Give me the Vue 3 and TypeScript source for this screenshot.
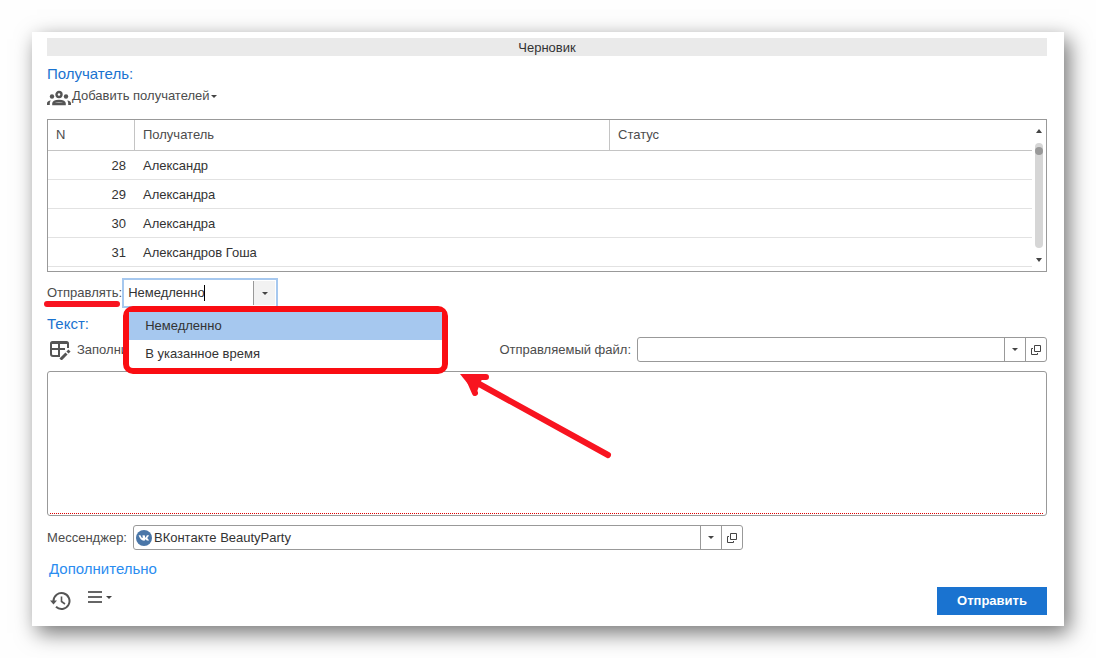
<script setup lang="ts">
import { ref } from 'vue'

interface Recipient {
  n: number
  name: string
  status: string
}

const recipients: Recipient[] = [
  { n: 28, name: 'Александр', status: '' },
  { n: 29, name: 'Александра', status: '' },
  { n: 30, name: 'Александра', status: '' },
  { n: 31, name: 'Александров Гоша', status: '' },
]

const sendOptions = ['Немедленно', 'В указанное время']
const sendMode = ref('Немедленно')
const file = ref('')
const message = ref('')
const messenger = ref('ВКонтакте BeautyParty')
</script>

<template>
  <main class="card">
    <header class="status-bar">Черновик</header>

    <h2 class="section">Получатель:</h2>
    <button type="button" class="tool add">
      <svg class="people" width="24" height="16" viewBox="0 0 24 16" fill="none" stroke="#555" stroke-width="2.400">
        <circle cx="12" cy="4.500" r="2.500" />
        <circle cx="5" cy="6.500" r="2.200" fill="#555" stroke="none" />
        <circle cx="19" cy="6.500" r="2.200" fill="#555" stroke="none" />
        <path d="M6.400 14v-.4c0-1.700 2.400-2.600 5.600-2.600s5.600.9 5.600 2.600v.4z" />
        <path d="M0 15v-1.400c0-1.700 1.300-2.800 3.800-3-.8.900-1 1.800-1 3V15zM24 15v-1.400c0-1.700-1.300-2.800-3.800-3 .8.900 1 1.800 1 3V15z" fill="#555" stroke="none" />
      </svg>
      <span>Добавить получателей</span>
      <i class="caret"></i>
    </button>

    <section class="grid-box">
      <table>
        <colgroup><col class="c-num" /><col class="c-name" /><col /></colgroup>
        <thead>
          <tr><th>N</th><th>Получатель</th><th>Статус</th></tr>
        </thead>
        <tbody>
          <tr v-for="r in recipients" :key="r.n">
            <td class="num">{{ r.n }}</td><td>{{ r.name }}</td><td>{{ r.status }}</td>
          </tr>
        </tbody>
      </table>
      <div class="scroll">
        <i class="arrow up"></i>
        <div class="track"><i class="thumb"></i></div>
        <i class="arrow down"></i>
      </div>
    </section>

    <div class="row send-row">
      <label for="send" class="marked">Отправлять:</label>
      <div class="combo">
        <input id="send" v-model="sendMode" type="text" role="combobox" aria-expanded="true" aria-controls="send-list" />
        <i class="cursor"></i>
        <button type="button" aria-label="Открыть список"><i class="caret"></i></button>
        <ul id="send-list" class="menu" role="listbox">
          <li v-for="o in sendOptions" :key="o" role="option" :aria-selected="o === sendMode" :class="{ active: o === sendMode }" @click="sendMode = o">{{ o }}</li>
        </ul>
        <svg class="pointer" width="156" height="92" viewBox="0 0 156 92" fill="none" stroke="#f81420" stroke-width="6" stroke-linecap="round">
          <path d="M148 83 12 8" />
          <path d="M26 5H8L15 21" />
          <path d="M0 2h24L16 22z" fill="#f81420" stroke="none" />
        </svg>
      </div>
    </div>

    <h2 class="section text-title">Текст:</h2>
    <div class="row file-row">
      <button type="button" class="tool fill">
        <svg width="21" height="20" viewBox="0 0 21 20" fill="none" stroke="#555" stroke-width="2">
          <path d="M10 16H3Q1 16 1 14V3.500Q1 2 2.500 2H16.500Q18 2 18 3.500V8M1 9H15M9 3V16" />
          <path d="M1 3H18" />
          <path d="M10.500 19.500 16.500 13.500" stroke-width="3" />
          <path d="M17.500 12.500 19.500 10.500" stroke-width="3" />
        </svg>
        <span>Заполнить</span>
      </button>
      <label for="file">Отправляемый файл:</label>
      <div class="field file-field">
        <input id="file" v-model="file" type="text" />
        <button type="button" aria-label="Выбрать файл"><i class="caret"></i></button>
        <button type="button" aria-label="Открыть файл">
          <svg width="10" height="10" viewBox="0 0 10 10" fill="none" stroke="#444"><path d="M3.500.5h6v6h-6zM2 3.500H.5v6h6V8" /></svg>
        </button>
      </div>
    </div>

    <div class="editor">
      <textarea v-model="message" aria-label="Текст"></textarea>
    </div>

    <div class="row messenger-row">
      <label for="messenger">Мессенджер:</label>
      <div class="field messenger-field">
        <svg class="vk" width="16" height="16" viewBox="0 0 16 16">
          <circle cx="8" cy="8" r="8" fill="#4a76a8" />
          <path d="M2.600 5.200h1.900c.5 1.500 1.100 2.500 1.800 2.900.4 0 .4-.5.4-1.200 0-.8-.2-1.100-.7-1.200.6-.7 2.900-.7 3 .1v1.800c.5.300 1.300-1 1.900-2.400h2c.2.600-1 2-1.700 2.800.2.500 1.900 1.700 1.900 2.600h-2.100c-.6-.5-1.300-1.500-1.800-1.400-.2.200-.1 1.200-.5 1.400-3.200.3-4.700-1.700-6.100-5.400z" fill="#fff" />
        </svg>
        <input id="messenger" v-model="messenger" type="text" />
        <button type="button" aria-label="Выбрать мессенджер"><i class="caret"></i></button>
        <button type="button" aria-label="Открыть мессенджер">
          <svg width="10" height="10" viewBox="0 0 10 10" fill="none" stroke="#444"><path d="M3.500.5h6v6h-6zM2 3.500H.5v6h6V8" /></svg>
        </button>
      </div>
    </div>

    <a href="#" class="more">Дополнительно</a>

    <footer class="row footer">
      <button type="button" class="tool" aria-label="История">
        <svg width="21" height="20" viewBox="0 0 21 20" fill="none" stroke="#555" stroke-width="2">
          <path d="M3.500 10A8 8 0 1 1 6 15.800" />
          <path d="M0 9.500H7L3.500 13.500z" fill="#555" stroke="none" />
          <path d="M11.500 5.500V10.500L15 13" stroke-width="1.600" />
        </svg>
      </button>
      <button type="button" class="tool list" aria-label="Меню">
        <svg width="14" height="12" viewBox="0 0 14 12" fill="#666"><path d="M0 0h14v2H0zM0 5h14v2H0zM0 10h14v2H0z" /></svg>
        <i class="caret"></i>
      </button>
      <button type="button" class="submit">Отправить</button>
    </footer>
  </main>
</template>

<style>
body {
  margin: 0;
  background: #fefefe;
}
</style>

<style scoped>
.card {
  margin: 32px;
  padding: 6px 17px 11px 15px;
  background: #fff;
  box-shadow: 5px 7px 20px rgba(0, 0, 0, 0.55);
  font: 13px/18px "Liberation Sans", Arial, sans-serif;
  color: #4c4c4c;
}
input, button, textarea {
  font: inherit;
  color: inherit;
  margin: 0;
  padding: 0;
  border: 0;
  background: none;
  outline: none;
  border-radius: 0;
}
input {
  flex: 1;
  min-width: 0;
  color: #333;
}
svg {
  display: block;
  flex: none;
}
.status-bar {
  height: 18px;
  line-height: 20px;
  background: #eaeaea;
  text-align: center;
  color: #333;
}
.section {
  margin: 8px 0 0;
  font-size: 15px;
  line-height: 20px;
  font-weight: normal;
  color: #1a73d0;
}
.tool {
  display: flex;
  align-items: center;
}
.add {
  height: 20px;
  margin-top: 2px;
  gap: 1px;
}
.people {
  align-self: flex-end;
}
.caret {
  width: 0;
  border: 3px solid transparent;
  border-top-color: #444;
  border-bottom: 0;
}
.grid-box {
  display: flex;
  margin-top: 13px;
  padding-bottom: 4px;
  border: 1px solid #999;
}
table {
  flex: 1;
  border-collapse: separate;
  border-spacing: 0;
  table-layout: fixed;
}
.c-num { width: 87px; }
.c-name { width: 475px; }
th {
  height: 30px;
  padding: 0 8px;
  text-align: left;
  font-weight: normal;
  border-bottom: 1px solid #c4c4c4;
  border-right: 1px solid #c4c4c4;
}
th:last-child { border-right: 0; }
td {
  height: 26px;
  padding: 2px 8px 0;
  border-bottom: 1px solid #e2e2e2;
  color: #333;
}
.num {
  padding-right: 9px;
  text-align: right;
}
.scroll {
  width: 14px;
  display: flex;
  flex-direction: column;
  align-items: center;
}
.arrow {
  border: 3px solid transparent;
}
.up {
  margin: 9px 0 10px;
  border-top: 0;
  border-bottom: 4px solid #444;
}
.down {
  margin: 10px 0 5px;
  border-bottom: 0;
  border-top: 4px solid #444;
}
.track {
  flex: 1;
  width: 8px;
  padding-top: 4px;
  border-radius: 4px;
  background: #d6d6d6;
}
.thumb {
  display: block;
  height: 8px;
  border-radius: 4px;
  background: #999;
}
.row {
  display: flex;
  align-items: center;
}
.send-row {
  margin-top: 6px;
}
.marked { position: relative; }
.marked::after {
  content: "";
  position: absolute;
  left: -3px;
  right: 2px;
  bottom: -5px;
  height: 6px;
  border-radius: 3px;
  background: #f81420;
}
.combo {
  position: relative;
  display: flex;
  width: 148px;
  height: 26px;
  padding-left: 4px;
  border: 2px solid #a6c8ef;
}
.combo button {
  width: 22px;
  margin: 1px;
  display: flex;
  align-items: center;
  justify-content: center;
  border-left: 1px solid #999;
  background: #f2f2f2;
}
.cursor {
  position: absolute;
  left: 80px;
  top: 5px;
  width: 1px;
  height: 16px;
  background: #000;
}
.menu {
  position: absolute;
  z-index: 1;
  left: -1px;
  top: 26px;
  width: 313px;
  margin: 0;
  padding: 0;
  list-style: none;
  border: 6px solid #fa0d12;
  border-radius: 10px;
  background: #fff;
  color: #333;
}
.menu li {
  padding: 0 16px;
  line-height: 28px;
}
.menu li.active {
  background: #a6c8ef;
}
.pointer {
  position: absolute;
  z-index: 1;
  left: 336px;
  top: 92px;
}
.text-title { margin-top: 6px; }
.file-row { margin-top: 3px; }
.fill {
  gap: 6px;
  margin: 0 auto 0 3px;
}
.field {
  box-sizing: border-box;
  display: flex;
  align-items: center;
  height: 25px;
  border: 1px solid #999;
  border-radius: 3px;
}
.field button {
  align-self: stretch;
  width: 21px;
  display: flex;
  align-items: center;
  justify-content: center;
  border-left: 1px solid #999;
}
.file-field {
  width: 41%;
  margin-left: 6px;
}
.editor {
  margin-top: 9px;
  padding: 2px 3px 1px 2px;
  border: 1px solid #999;
  border-radius: 3px;
}
textarea {
  display: block;
  box-sizing: border-box;
  width: 100%;
  height: 140px;
  resize: none;
  border-bottom: 1px dotted #d00;
}
.messenger-row { margin-top: 9px; }
.messenger-field {
  width: 61%;
  margin-left: 6px;
  padding-left: 2px;
}
.vk { margin-right: 2px; }
.more {
  display: block;
  width: max-content;
  margin: 9px 0 0 2px;
  font-size: 15px;
  line-height: 20px;
  color: #2a8cf0;
  text-decoration: none;
}
.footer {
  margin-top: 8px;
  padding-left: 3px;
}
.list {
  gap: 4px;
  margin: 0 auto 8px 17px;
}
.submit {
  width: 110px;
  height: 28px;
  background: #1a73d0;
  color: #fff;
  font-weight: bold;
}
</style>
